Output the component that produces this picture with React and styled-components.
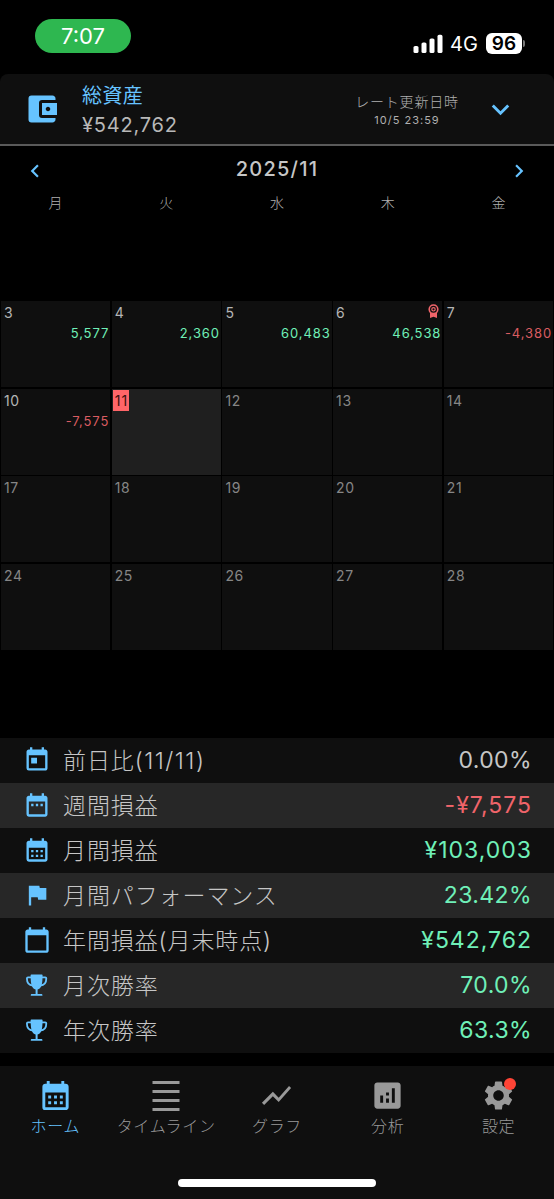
import React from 'react';
import styled, { createGlobalStyle } from 'styled-components';
import {
    MdAccountBalanceWallet, MdExpandMore, MdChevronLeft, MdChevronRight, MdToday,
    MdDateRange, MdCalendarMonth, MdFlag, MdCalendarToday,
    MdShowChart, MdAnalytics, MdSettings
} from 'react-icons/md';

const green = '#6ff0b8';
const red = '#f0646a';
const blue = '#66c3ff';

const weekdays = ['月', '火', '水', '木', '金'];

const weeks = [
    [{ day: 3, amount: '5,577' }, { day: 4, amount: '2,360' }, { day: 5, amount: '60,483' }, { day: 6, amount: '46,538', best: true }, { day: 7, amount: '-4,380' }],
    [{ day: 10, amount: '-7,575' }, { day: 11, today: true }, { day: 12 }, { day: 13 }, { day: 14 }],
    [{ day: 17 }, { day: 18 }, { day: 19 }, { day: 20 }, { day: 21 }],
    [{ day: 24 }, { day: 25 }, { day: 26 }, { day: 27 }, { day: 28 }]
];

function Trophy() {
    return (
        <svg width="28" height="28" viewBox="0 0 28 28">
            <path d="M9 6.4H5c-.8 0-1.100.4-1.100 1.200 0 4 1.900 6.700 6 7M18.200 6.400h4c.8 0 1.100.4 1.100 1.200 0 4-1.900 6.700-6 7" fill="none" stroke="currentColor" strokeWidth="1.8" />
            <path d="M8.600 3.600h10c.6 0 1 .4 1 1-.1 4.400-.3 7.600-1.100 9.900-.8 2.300-2.100 3.500-3.900 3.900V23h4.100c.4 0 .7.400.7 1v.800H7.800V24c0-.6.3-1 .7-1h4.100v-4.600c-1.800-.4-3.100-1.600-3.900-3.900-.8-2.300-1-5.500-1.100-9.900 0-.6.4-1 1-1z" fill="currentColor" />
        </svg>
    )
};

function Medal() {
    return (
        <svg width="11" height="14" viewBox="0 0 11 14" fill="none">
            <path d="M2 8.5h7V14l-3.500-1.200L2 14z" fill={red} />
            <circle cx="5.5" cy="5.3" r="4.300" fill="#0f0f0f" stroke={red} strokeWidth="1.6" />
            <circle cx="5.5" cy="5.3" r="1.700" stroke={red} strokeWidth="1.2" />
        </svg>
    )
};

function Lines() {
    return (
        <svg width="28" height="30" viewBox="0 0 28 30" fill="currentColor">
            <rect x="0.5" y="0" width="27" height="3" />
            <rect x="0.5" y="9" width="27" height="3" />
            <rect x="0.5" y="18" width="27" height="3" />
            <rect x="0.5" y="27" width="27" height="3" />
        </svg>
    )
};

const stats = [
    { icon: <MdToday />, label: '前日比', note: '(11/11)', value: '0.00%', color: '#c6c6c6', tight: true },
    { icon: <MdDateRange />, label: '週間損益', value: '-¥7,575', color: red },
    { icon: <MdCalendarMonth />, label: '月間損益', value: '¥103,003', color: green },
    { icon: <MdFlag />, label: '月間パフォーマンス', value: '23.42%', color: green, tight: true },
    { icon: <MdCalendarToday />, label: '年間損益(月末時点)', value: '¥542,762', color: green },
    { icon: <Trophy />, label: '月次勝率', value: '70.0%', color: green, tight: true },
    { icon: <Trophy />, label: '年次勝率', value: '63.3%', color: green, tight: true }
];

const tabs = [
    { icon: <MdCalendarMonth />, label: 'ホーム', active: true },
    { icon: <Lines />, label: 'タイムライン' },
    { icon: <MdShowChart />, label: 'グラフ' },
    { icon: <MdAnalytics />, label: '分析' },
    { icon: <MdSettings />, label: '設定', badge: true }
];

function App() {
    return (
        <Screen>
            <GlobalStyle />
            <StatusBar>
                <Clock>7:07</Clock>
                <Signals>
                    <svg width="30" height="20" viewBox="0 0 30 20" fill="#fff">
                        <rect x="0.5" y="12" width="5" height="7" rx="1.6" />
                        <rect x="8.5" y="8.5" width="5" height="10.5" rx="1.6" />
                        <rect x="16.5" y="4.5" width="5" height="14.5" rx="1.6" />
                        <rect x="24.5" y="0.8" width="5" height="18.2" rx="1.6" />
                    </svg>
                    <Network>4G</Network>
                    <Battery>96</Battery>
                    <BatteryTip />
                </Signals>
            </StatusBar>
            <Assets>
                <WalletIcon><MdAccountBalanceWallet /></WalletIcon>
                <Total>
                    <TotalLabel>総資産</TotalLabel>
                    <TotalValue>¥542,762</TotalValue>
                </Total>
                <Updated>
                    <UpdatedLabel>レート更新日時</UpdatedLabel>
                    <UpdatedTime>10/5 23:59</UpdatedTime>
                </Updated>
                <ExpandIcon><MdExpandMore /></ExpandIcon>
            </Assets>
            <MonthBar>
                <Arrow><MdChevronLeft /></Arrow>
                <Month>2025/11</Month>
                <Arrow><MdChevronRight /></Arrow>
            </MonthBar>
            <Weekdays>
                {weekdays.map(name => <Weekday key={name}>{name}</Weekday>)}
            </Weekdays>
            <Calendar>
                {weeks.map((week, i) => week.map(item => (
                    <Cell key={item.day} $today={item.today}>
                        <CellTop>
                            <Day $today={item.today} $past={i === 0 || item.day === 10}>{item.day}</Day>
                            {item.best && <Medal />}
                        </CellTop>
                        {item.amount && <Amount $minus={item.amount.startsWith('-')}>{item.amount}</Amount>}
                    </Cell>
                )))}
            </Calendar>
            <Stats>
                {stats.map(item => (
                    <StatRow key={item.label}>
                        <StatIcon>{item.icon}</StatIcon>
                        <StatLabel>{item.label}{item.note && <Note>{item.note}</Note>}</StatLabel>
                        <StatValue $color={item.color} $tight={item.tight}>{item.value}</StatValue>
                    </StatRow>
                ))}
            </Stats>
            <TabBar>
                <Tabs>
                    {tabs.map(tab => (
                        <Tab key={tab.label} $active={tab.active}>
                            <TabIcon>
                                {tab.icon}
                                {tab.badge && <Badge />}
                            </TabIcon>
                            <TabLabel>{tab.label}</TabLabel>
                        </Tab>
                    ))}
                </Tabs>
                <HomeIndicator />
            </TabBar>
        </Screen>
    )
};

const GlobalStyle = createGlobalStyle`
    * {
        box-sizing: border-box;
    }
    body {
        margin: 0;
        background: #000;
    }
    svg {
        display: block;
        flex: none;
    }
`

const Screen = styled.div`
    display: flex;
    flex-direction: column;
    width: 554px;
    height: 1199px;
    overflow: hidden;
    background: #000;
    color: #c6c6c6;
    font-family: Inter, "Noto Sans CJK JP", sans-serif;
    font-weight: 400;
    white-space: nowrap;
`

const StatusBar = styled.div`
    display: flex;
    justify-content: space-between;
    align-items: flex-start;
    height: 74px;
    padding: 19px 28px 0 35px;
    color: #fff;
`

const Clock = styled.div`
    width: 96px;
    height: 34px;
    border-radius: 17px;
    background: #2eb750;
    font-size: 22px;
    font-weight: 400;
    line-height: 34px;
    text-align: center;
`

const Signals = styled.div`
    display: flex;
    align-items: center;
    height: 22px;
    margin: 13.5px 1px 0 0;
`

const Network = styled.div`
    width: 28px;
    margin: 1px 8px 0 7px;
    font-size: 20px;
    line-height: 22px;
    text-align: center;
`

const Battery = styled.div`
    width: 36px;
    height: 21px;
    border-radius: 6px;
    background: #fff;
    color: #000;
    font-size: 19px;
    font-weight: 600;
    line-height: 21px;
    text-align: center;
`

const BatteryTip = styled.div`
    width: 2px;
    height: 7px;
    margin-left: 1px;
    border-radius: 0 2px 2px 0;
    background: #777;
`

const Assets = styled.div`
    display: flex;
    height: 72px;
    padding-left: 23px;
    border-bottom: 2px solid #5a5a5a;
    border-radius: 8px 8px 0 0;
    background: #0f0f0f;
`

const WalletIcon = styled.div`
    width: 59px;
    padding: 17px 0 0 0.5px;
    color: ${blue};
    font-size: 36px;
`

const Total = styled.div`
    flex: 1;
    padding-top: 7px;
`

const TotalLabel = styled.div`
    color: ${blue};
    font-size: 20px;
    line-height: 30px;
    letter-spacing: 0.4px;
`

const TotalValue = styled.div`
    color: #b8b8b8;
    font-size: 20px;
    line-height: 29px;
    letter-spacing: 0.8px;
`

const Updated = styled.div`
    width: 104px;
    margin-right: 24px;
    padding-top: 17px;
    color: #b0b0b0;
    text-align: center;
`

const UpdatedLabel = styled.div`
    font-size: 14px;
    font-weight: 300;
    line-height: 22px;
    letter-spacing: 0.8px;
`

const UpdatedTime = styled.div`
    font-size: 11px;
    line-height: 14px;
    letter-spacing: 1px;
`

const ExpandIcon = styled.div`
    width: 71px;
    padding-top: 18px;
    color: ${blue};
    font-size: 35px;
`

const MonthBar = styled.div`
    display: flex;
    justify-content: space-between;
    align-items: center;
    height: 46px;
    padding: 0 22px;
`

const Arrow = styled.div`
    padding-top: 3px;
    color: ${blue};
    font-size: 26px;
`

const Month = styled.div`
    font-size: 20px;
    font-weight: 500;
    letter-spacing: 1.2px;
    line-height: 46px;
`

const Weekdays = styled.div`
    display: grid;
    grid-template-columns: repeat(5, 1fr);
    height: 109px;
`

const Weekday = styled.div`
    color: #b0b0b0;
    font-size: 14px;
    font-weight: 300;
    line-height: 21px;
    text-align: center;
`

const Calendar = styled.div`
    display: grid;
    grid-template-columns: repeat(5, 1fr);
    grid-template-rows: repeat(4, 1fr);
    gap: 1.5px;
    height: 349px;
    padding: 0 1px;
`

const Cell = styled.div`
    padding: 1px 1px 0;
    background: ${props => props.$today ? '#1f1f1f' : '#0f0f0f'};
`

const CellTop = styled.div`
    display: flex;
    justify-content: space-between;
    height: 21px;
    padding-right: 2px;

    svg {
        margin-top: 2px;
    }
`

const Day = styled.div`
    height: 21px;
    padding: 0 1px 0 2px;
    background: ${props => props.$today ? '#ff6568' : 'transparent'};
    color: ${props => props.$today ? '#3a1010' : props.$past ? '#b5b5b5' : '#868686'};
    font-size: 14px;
    line-height: 21px;
    letter-spacing: ${props => props.$today ? '1.2px' : '0.6px'};
`

const Amount = styled.div`
    color: ${props => props.$minus ? '#d95c61' : green};
    font-size: 13px;
    font-weight: 400;
    line-height: 21px;
    letter-spacing: 0.9px;
    text-align: right;
`

const Stats = styled.div`
    margin-top: 87.5px;
`

const StatRow = styled.div`
    display: flex;
    align-items: center;
    height: 45px;
    padding: 0 22px 0 23px;
    background: #0f0f0f;

    &:nth-child(even) {
        background: #272727;
    }
`

const StatIcon = styled.div`
    width: 40px;
    color: ${blue};
    font-size: 28px;
`

const StatLabel = styled.div`
    flex: 1;
    padding-top: 2px;
    font-size: 23px;
    font-weight: 300;
    line-height: 43px;
    letter-spacing: 0.9px;
`

const Note = styled.span`
    letter-spacing: 1.5px;
`

const StatValue = styled.div`
    color: ${props => props.$color};
    font-size: 23px;
    line-height: 45px;
    letter-spacing: ${props => props.$tight ? '0.4px' : '1px'};
`

const TabBar = styled.div`
    display: flex;
    flex-direction: column;
    align-items: center;
    justify-content: space-between;
    height: 133px;
    margin-top: 13.5px;
    padding: 12px 0;
    background: #0f0f0f;
`

const Tabs = styled.div`
    display: grid;
    grid-template-columns: repeat(5, 1fr);
    width: 100%;
`

const Tab = styled.div`
    display: flex;
    flex-direction: column;
    align-items: center;
    color: ${props => props.$active ? blue : '#999'};
`

const TabIcon = styled.div`
    position: relative;
    display: flex;
    align-items: center;
    height: 35px;
    font-size: 35px;
`

const Badge = styled.div`
    position: absolute;
    top: 0;
    right: 0;
    width: 12px;
    height: 12px;
    border-radius: 50%;
    background: #ff4436;
`

const TabLabel = styled.div`
    font-size: 16px;
    font-weight: 300;
    line-height: 27px;
    letter-spacing: 0.7px;
`

const HomeIndicator = styled.div`
    width: 198px;
    height: 8px;
    border-radius: 4px;
    background: #fff;
`

export default App
